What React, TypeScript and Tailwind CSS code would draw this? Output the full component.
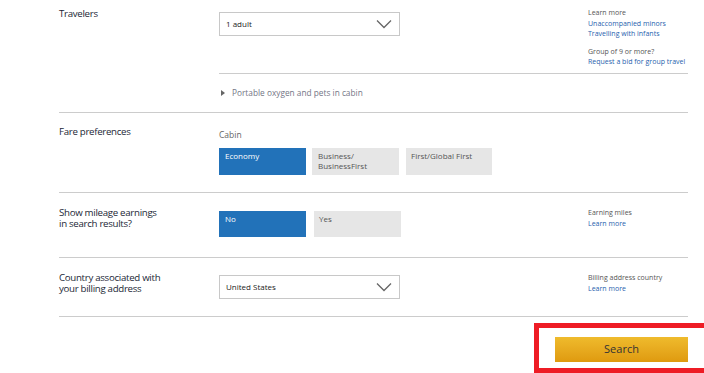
import React from "react";

const Chevron = () => (
  <svg width="16" height="10" viewBox="0 0 16 10" fill="none">
    <path d="M1 1.5 L8 8.5 L15 1.5" stroke="#666" strokeWidth="1.3" />
  </svg>
);

const Select = ({ value }: { value: string }) => (
  <div className="flex h-[24px] w-[181px] items-center justify-between border border-[#c8c8c8] bg-white pl-[6px] pr-[7px]">
    <span className="text-[8px] text-[#222]">{value}</span>
    <Chevron />
  </div>
);

export default function App() {
  return (
    <div
      className="h-[373px] w-[704px] overflow-hidden bg-white"
      style={{ fontFamily: '"Open Sans", "Liberation Sans", sans-serif' }}
    >
      <div className="ml-[59px] w-[629px]">
        {/* Travelers */}
        <div className="flex border-b border-[#cccccc]">
          <div className="w-[160px] pt-[7px] text-[9.7px] tracking-[-0.3px] text-[#1b1f36]">Travelers</div>
          <div className="flex-1">
            <div className="flex h-[74px] border-b border-[#cccccc]">
              <div className="w-[369px] pt-[12px]">
                <Select value="1 adult" />
              </div>
              <div className="flex flex-col pt-[8px] text-[7px] leading-[10.5px]">
                <span className="text-[#555]">Learn more</span>
                <span className="text-[#1f5fae]">Unaccompanied minors</span>
                <span className="text-[#1f5fae]">Travelling with infants</span>
                <span className="mt-[7px] text-[#555]">Group of 9 or more?</span>
                <span className="text-[#1f5fae]">Request a bid for group travel</span>
              </div>
            </div>
            <div className="flex h-[38px] items-center pl-[2px] text-[8.3px] text-[#737585]">
              <svg width="5" height="6" viewBox="0 0 5 6" className="mr-[6px]">
                <path d="M0 0 L4 3 L0 6 Z" fill="#666" />
              </svg>
              Portable oxygen and pets in cabin
            </div>
          </div>
        </div>

        {/* Fare preferences */}
        <div className="flex h-[80px] border-b border-[#cccccc]">
          <div className="w-[160px] pt-[12px] text-[9.7px] tracking-[-0.3px] text-[#1b1f36]">Fare preferences</div>
          <div className="flex flex-col pt-[16px]">
            <span className="text-[8.5px] leading-[12px] text-[#666]">Cabin</span>
            <div className="mt-[7px] flex gap-[6px]">
              <div className="h-[27px] w-[87px] bg-[#2272b9] px-[6px] pt-[3px] text-[8px] leading-[10px] text-white">Economy</div>
              <div className="flex h-[27px] w-[87px] flex-col bg-[#e6e6e6] px-[6px] pt-[3px] text-[8px] leading-[10px] text-[#555]">
                <span>Business/</span>
                <span>BusinessFirst</span>
              </div>
              <div className="ml-[1px] h-[27px] w-[86px] bg-[#e6e6e6] px-[5px] pt-[3px] text-[8px] leading-[10px] text-[#555]">First/Global First</div>
            </div>
          </div>
        </div>

        {/* Mileage */}
        <div className="flex h-[65px] border-b border-[#cccccc]">
          <div className="flex w-[160px] flex-col pt-[14px] text-[9.7px] leading-[11px] tracking-[-0.3px] text-[#1b1f36]">
            <span>Show mileage earnings</span>
            <span>in search results?</span>
          </div>
          <div className="w-[369px] pt-[18px]">
            <div className="flex gap-[8px]">
              <div className="h-[26px] w-[87px] bg-[#2272b9] px-[6px] pt-[3px] text-[8px] leading-[10px] text-white">No</div>
              <div className="h-[26px] w-[87px] bg-[#e6e6e6] px-[5px] pt-[3px] text-[8px] leading-[10px] text-[#555]">Yes</div>
            </div>
          </div>
          <div className="flex flex-col pt-[15px] text-[7px] leading-[10.5px]">
            <span className="text-[#555]">Earning miles</span>
            <span className="text-[#1f5fae]">Learn more</span>
          </div>
        </div>

        {/* Country */}
        <div className="flex h-[59px] border-b border-[#cccccc]">
          <div className="flex w-[160px] flex-col pt-[14px] text-[9.7px] leading-[11px] tracking-[-0.3px] text-[#1b1f36]">
            <span>Country associated with</span>
            <span>your billing address</span>
          </div>
          <div className="w-[369px] pt-[17px]">
            <Select value="United States" />
          </div>
          <div className="flex flex-col pt-[15px] text-[7px] leading-[10.5px]">
            <span className="text-[#555]">Billing address country</span>
            <span className="text-[#1f5fae]">Learn more</span>
          </div>
        </div>
      </div>

      {/* Search */}
      <div className="mt-[6px] flex justify-end">
        <div className="-mr-[5px] flex h-[50px] w-[175px] items-start justify-start border-[5px] border-[#ee1c25] pl-[16px] pt-[9px]">
          <button className="h-[25px] w-[133px] bg-gradient-to-b from-[#efbb2c] to-[#df9a0e] text-[11px] text-[#333]">
            Search
          </button>
        </div>
      </div>
    </div>
  );
}
